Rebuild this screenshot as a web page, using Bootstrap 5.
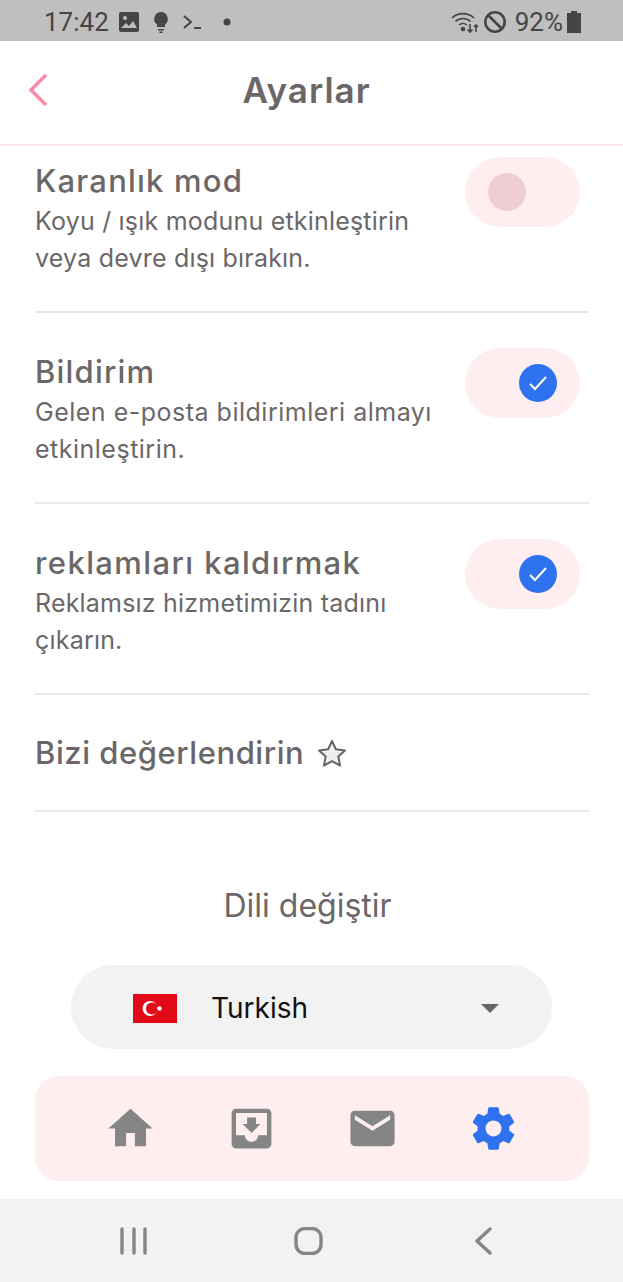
<!DOCTYPE html>
<html lang="tr">
<head>
  <meta charset="UTF-8" />
  <meta name="viewport" content="width=device-width, initial-scale=1.0" />
  <title>Ayarlar</title>
  <link href="https://cdn.jsdelivr.net/npm/bootstrap@5.3.0/dist/css/bootstrap.min.css" rel="stylesheet">
  <style>
    body {
      background-color: #fff;
      font-family: "Inter", "Liberation Sans", sans-serif;
      color: #6b6768;
    }
    .statusBar {
      height: 41px;
      background-color: #bfbfbf;
      color: #454545;
      font-family: "Roboto", sans-serif;
      font-size: 26px;
      padding: 3px 42px 0 44px;
    }
    .statusLeft { gap: 9px; }
    .dotIcon { margin-left: 12px; }
    .topBar {
      height: 105px;
      border-bottom: 2px solid #fbe6ea;
      padding: 0 0 6px 27px;
    }
    .topTitle {
      font-size: 35px;
      font-weight: 600;
      letter-spacing: 1px;
      line-height: 1;
      left: 0;
      right: 10px;
      top: 32px;
    }
    .settingList { padding: 0 34px 0 35px; }
    .settingRow {
      padding: 35px 9px 0 0;
      height: 191px;
      border-bottom: 2px solid #e8e8e8;
    }
    .settingRow.firstRow { padding-top: 11px; height: 167px; }
    .settingText { margin-top: 6px; }
    .settingTitle {
      font-size: 31px;
      font-weight: 500;
      letter-spacing: 1.2px;
      line-height: 36px;
    }
    .settingTitle.wideTitle { letter-spacing: 1.4px; }
    .settingTitle.tightTitle { letter-spacing: .55px; }
    .settingDesc {
      font-size: 25px;
      letter-spacing: .2px;
      line-height: 37px;
      margin-top: 4px;
    }
    .settingDesc.wideDesc { letter-spacing: .5px; }
    .toggleTrack {
      width: 115px;
      height: 70px;
      padding: 0 23px;
      background-color: #feeef0;
      flex-shrink: 0;
    }
    .toggleKnob {
      width: 38px;
      height: 38px;
      background-color: #f0cdd3;
    }
    .toggleKnob.isOn { background-color: #2f72f0; }
    .rateRow {
      height: 117px;
      gap: 13px;
      padding: 0;
    }
    .langLabel {
      font-size: 32px;
      line-height: 40px;
      margin-top: 74px;
      padding-right: 8px;
    }
    .langSelect {
      height: 84px;
      margin: 39px 71px 0 71px;
      padding: 2px 53px 0 62px;
      background-color: #f2f2f2;
      color: #111;
      font-size: 28px;
    }
    .flagBox { margin-right: 34px; }
    .caretDown {
      width: 0;
      height: 0;
      border-left: 9px solid transparent;
      border-right: 9px solid transparent;
      border-top: 9px solid #666;
    }
    .tabBar {
      height: 105px;
      margin: 27px 34px 0 35px;
      padding-right: 1px;
      gap: 68px;
      background-color: #feeef0;
      border-radius: 24px;
    }
    .sysBar {
      height: 83px;
      margin-top: 18px;
      padding-right: 7px;
      gap: 122px;
      background-color: #f2f2f2;
    }
  </style>
</head>
<body>
  <!-- Status bar -->
  <div class="statusBar d-flex align-items-center justify-content-between">
    <div class="statusLeft d-flex align-items-center">
      <span>17:42</span>
      <svg width="22" height="22" viewBox="0 0 22 22"><rect x="1" y="1" width="20" height="20" rx="2" fill="#454545"/><circle cx="7" cy="7" r="2" fill="#bfbfbf"/><path d="M3 17l5-5 3 3 4-5 4 7z" fill="#bfbfbf"/></svg>
      <svg class="ms-1" width="16" height="22" viewBox="0 0 16 22"><path d="M8 1a7 7 0 0 0-4 12.600V16h8v-2.400A7 7 0 0 0 8 1zM5 18h6v1.500H5zM6.500 20.500h3V22h-3z" fill="#454545"/></svg>
      <svg class="ms-1" width="20" height="18" viewBox="0 0 20 18"><path d="M2 3l7 6-7 6" fill="none" stroke="#454545" stroke-width="2"/><path d="M12 15h7" stroke="#454545" stroke-width="2"/></svg>
      <svg class="dotIcon" width="8" height="8" viewBox="0 0 8 8"><circle cx="4" cy="4" r="3.500" fill="#454545"/></svg>
    </div>
    <div class="d-flex align-items-center gap-1">
      <svg width="28" height="24" viewBox="0 0 28 24" fill="none" stroke="#454545" stroke-width="1.600"><path d="M1 8a16 16 0 0 1 22 0M4.500 11.500a11 11 0 0 1 15 0M8 15a6 6 0 0 1 8 0"/><circle cx="12" cy="19" r="1.500" fill="#454545"/><path d="M19 14v8M16.500 19.500l2.500 2.500 2.500-2.500M25 22v-7M23 17l2-2 2 2"/></svg>
      <svg width="24" height="24" viewBox="0 0 24 24" fill="none" stroke="#454545" stroke-width="2.600"><circle cx="12" cy="12" r="9.700"/><path d="M5 5l14 14"/></svg>
      <span class="ms-1">92%</span>
      <svg width="14" height="24" viewBox="0 0 14 24"><path d="M4 1h6v2h4v20H0V3h4z" fill="#454545"/></svg>
    </div>
  </div>

  <!-- Header -->
  <div class="topBar position-relative d-flex align-items-center">
    <svg width="22" height="34" viewBox="0 0 22 34"><path d="M19 2L4 17l15 15" fill="none" stroke="#f58ea8" stroke-width="3.600"/></svg>
    <div class="topTitle position-absolute text-center">Ayarlar</div>
  </div>

  <!-- Settings -->
  <div class="settingList">
    <div class="settingRow firstRow d-flex justify-content-between align-items-start">
      <div class="settingText">
        <div class="settingTitle">Karanlık mod</div>
        <div class="settingDesc">Koyu / ışık modunu etkinleştirin<br>veya devre dışı bırakın.</div>
      </div>
      <div class="toggleTrack rounded-pill d-flex align-items-center justify-content-start">
        <div class="toggleKnob rounded-circle"></div>
      </div>
    </div>

    <div class="settingRow d-flex justify-content-between align-items-start">
      <div class="settingText">
        <div class="settingTitle">Bildirim</div>
        <div class="settingDesc wideDesc">Gelen e-posta bildirimleri almayı<br>etkinleştirin.</div>
      </div>
      <div class="toggleTrack rounded-pill d-flex align-items-center justify-content-end">
        <div class="toggleKnob isOn rounded-circle d-flex align-items-center justify-content-center">
          <svg width="20" height="16" viewBox="0 0 20 16"><path d="M2 9l5 5L18 2" fill="none" stroke="#fff" stroke-width="2"/></svg>
        </div>
      </div>
    </div>

    <div class="settingRow d-flex justify-content-between align-items-start">
      <div class="settingText">
        <div class="settingTitle wideTitle">reklamları kaldırmak</div>
        <div class="settingDesc">Reklamsız hizmetimizin tadını<br>çıkarın.</div>
      </div>
      <div class="toggleTrack rounded-pill d-flex align-items-center justify-content-end">
        <div class="toggleKnob isOn rounded-circle d-flex align-items-center justify-content-center">
          <svg width="20" height="16" viewBox="0 0 20 16"><path d="M2 9l5 5L18 2" fill="none" stroke="#fff" stroke-width="2"/></svg>
        </div>
      </div>
    </div>

    <div class="settingRow rateRow d-flex align-items-center">
      <div class="settingTitle tightTitle">Bizi değerlendirin</div>
      <svg width="30" height="28" viewBox="0 0 30 28"><path d="M15 2l3.900 8.300 9.100 1.100-6.700 6.200 1.800 9-8.100-4.500-8.100 4.500 1.800-9L2 11.400l9.100-1.100z" fill="#efefef" stroke="#666" stroke-width="2" stroke-linejoin="round"/></svg>
    </div>
  </div>

  <!-- Language -->
  <div class="langLabel text-center">Dili değiştir</div>
  <div class="langSelect rounded-pill d-flex align-items-center">
    <svg class="flagBox" width="44" height="29" viewBox="0 0 44 29">
      <rect width="44" height="29" fill="#e30a17"/>
      <circle cx="17" cy="14.500" r="7.500" fill="#fff"/>
      <circle cx="19" cy="14.500" r="6" fill="#e30a17"/>
      <circle cx="26.500" cy="14.500" r="2.200" fill="#fff"/>
    </svg>
    <span class="flex-grow-1">Turkish</span>
    <div class="caretDown"></div>
  </div>

  <!-- Bottom tabs -->
  <div class="tabBar d-flex align-items-center justify-content-center">
    <svg width="53" height="53" viewBox="0 0 24 24" fill="#858585"><path d="M10 20v-6h4v6h5v-8h3L12 3 2 12h3v8z"/></svg>
    <svg width="53" height="53" viewBox="0 0 24 24" fill="#858585"><path d="M19 3H4.990c-1.110 0-1.980.89-1.980 2L3 19c0 1.100.88 2 1.990 2H19c1.100 0 2-.9 2-2V5c0-1.110-.9-2-2-2zm0 12h-4c0 1.660-1.350 3-3 3s-3-1.340-3-3H4.990V5H19v10zm-3-5h-2V7h-4v3H8l4 4 4-4z"/></svg>
    <svg width="53" height="53" viewBox="0 0 24 24" fill="#858585"><path d="M20 4H4c-1.100 0-1.990.9-1.990 2L2 18c0 1.100.9 2 2 2h16c1.100 0 2-.9 2-2V6c0-1.100-.9-2-2-2zm0 4l-8 5-8-5V6l8 5 8-5v2z"/></svg>
    <svg width="53" height="53" viewBox="0 0 24 24" fill="#2f72f0"><path d="M19.140 12.940c.04-.3.06-.61.06-.94 0-.32-.02-.64-.07-.94l2.030-1.580c.18-.14.23-.41.12-.61l-1.920-3.320c-.12-.22-.37-.29-.59-.22l-2.390.96c-.5-.38-1.030-.7-1.620-.94l-.36-2.540c-.04-.24-.24-.41-.48-.41h-3.840c-.24 0-.43.17-.47.41l-.36 2.540c-.59.24-1.130.57-1.620.94l-2.390-.96c-.22-.08-.47 0-.59.22L2.740 8.870c-.12.21-.08.47.12.61l2.030 1.580c-.05.3-.09.63-.09.94s.02.64.07.94l-2.030 1.580c-.18.14-.23.41-.12.61l1.920 3.320c.12.22.37.29.59.22l2.390-.96c.5.38 1.030.7 1.620.94l.36 2.540c.05.24.24.41.48.41h3.840c.24 0 .44-.17.47-.41l.36-2.540c.59-.24 1.130-.56 1.620-.94l2.390.96c.22.08.47 0 .59-.22l1.920-3.320c.12-.22.07-.47-.12-.61l-2.010-1.580zM12 15.600c-1.980 0-3.600-1.620-3.600-3.600s1.620-3.600 3.600-3.600 3.600 1.620 3.600 3.600-1.620 3.600-3.600 3.600z"/></svg>
  </div>

  <!-- System nav -->
  <div class="sysBar d-flex align-items-center justify-content-center">
    <svg width="53" height="28" viewBox="0 0 53 28"><path d="M15 2v24M27 2v24M38 2v24" stroke="#858585" stroke-width="3.400" stroke-linecap="round"/></svg>
    <svg width="53" height="28" viewBox="0 0 53 28"><rect x="14" y="1.500" width="25" height="25" rx="9" fill="none" stroke="#858585" stroke-width="3.400"/></svg>
    <svg width="53" height="28" viewBox="0 0 53 28"><path d="M33 2L20 14l13 12" fill="none" stroke="#858585" stroke-width="3.400" stroke-linecap="round" stroke-linejoin="round"/></svg>
  </div>

  <script src="https://cdn.jsdelivr.net/npm/bootstrap@5.3.0/dist/js/bootstrap.bundle.min.js"></script>
</body>
</html>
